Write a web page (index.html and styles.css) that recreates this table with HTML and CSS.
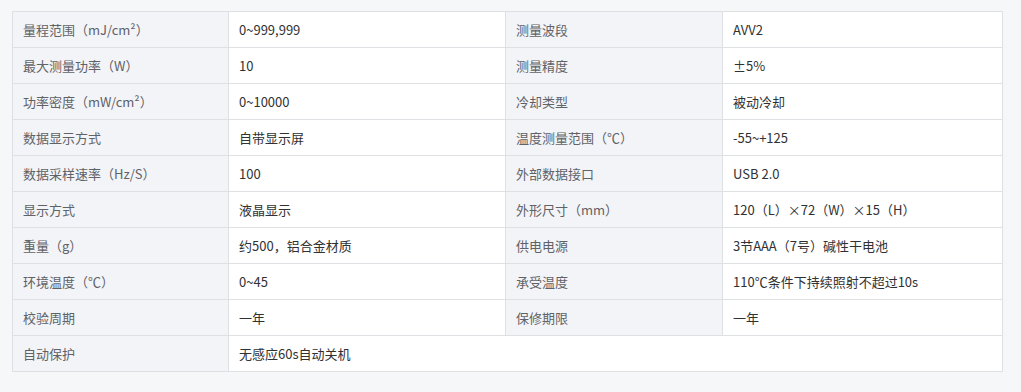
FILE: index.html
```html
<!DOCTYPE html>
<html lang="zh-CN">
<head>
<meta charset="utf-8">
<link rel="stylesheet" href="styles.css">
</head>
<body>
<div class="wrap">
<table class="spec">
<colgroup><col class="c1"><col class="c2"><col class="c3"><col class="c4"></colgroup>
<tbody>
<tr><td class="lb">量程范围（mJ/cm²）</td><td>0~999,999</td><td class="lb">测量波段</td><td>AVV2</td></tr>
<tr><td class="lb">最大测量功率（W）</td><td>10</td><td class="lb">测量精度</td><td>±5%</td></tr>
<tr><td class="lb">功率密度（mW/cm²）</td><td>0~10000</td><td class="lb">冷却类型</td><td>被动冷却</td></tr>
<tr><td class="lb">数据显示方式</td><td>自带显示屏</td><td class="lb">温度测量范围（℃）</td><td>-55~+125</td></tr>
<tr><td class="lb">数据采样速率（Hz/S）</td><td>100</td><td class="lb">外部数据接口</td><td>USB 2.0</td></tr>
<tr><td class="lb">显示方式</td><td>液晶显示</td><td class="lb">外形尺寸（mm）</td><td>120（L）×72（W）×15（H）</td></tr>
<tr><td class="lb">重量（g）</td><td>约500，铝合金材质</td><td class="lb">供电电源</td><td>3节AAA（7号）碱性干电池</td></tr>
<tr><td class="lb">环境温度（℃）</td><td>0~45</td><td class="lb">承受温度</td><td>110℃条件下持续照射不超过10s</td></tr>
<tr><td class="lb">校验周期</td><td>一年</td><td class="lb">保修期限</td><td>一年</td></tr>
<tr><td class="lb">自动保护</td><td colspan="3">无感应60s自动关机</td></tr>
</tbody>
</table>
</div>
</body>
</html>
```
FILE: styles.css
```css
html, body { margin: 0; padding: 0; }
body {
  background: #f6f7f9;
  font-family: "Noto Sans CJK SC", "Noto Sans", sans-serif;
  font-size: 13px;
  width: 1021px;
  height: 392px;
  overflow: hidden;
}
.wrap { padding: 11px 20px 0 12px; }
.spec {
  border-collapse: collapse;
  width: 990px;
  table-layout: fixed;
  background: #fff;
}
.c1 { width: 216px; }
.c2 { width: 277px; }
.c3 { width: 217px; }
.c4 { width: 280px; }
.spec td {
  border: 1px solid #dfe0e3;
  height: 36px;
  padding: 0 10px;
  color: #303133;
  line-height: 20px;
  vertical-align: middle;
  white-space: nowrap;
  box-sizing: border-box;
}
.spec td.lb {
  background: #f3f4f8;
  color: #606266;
}
```
